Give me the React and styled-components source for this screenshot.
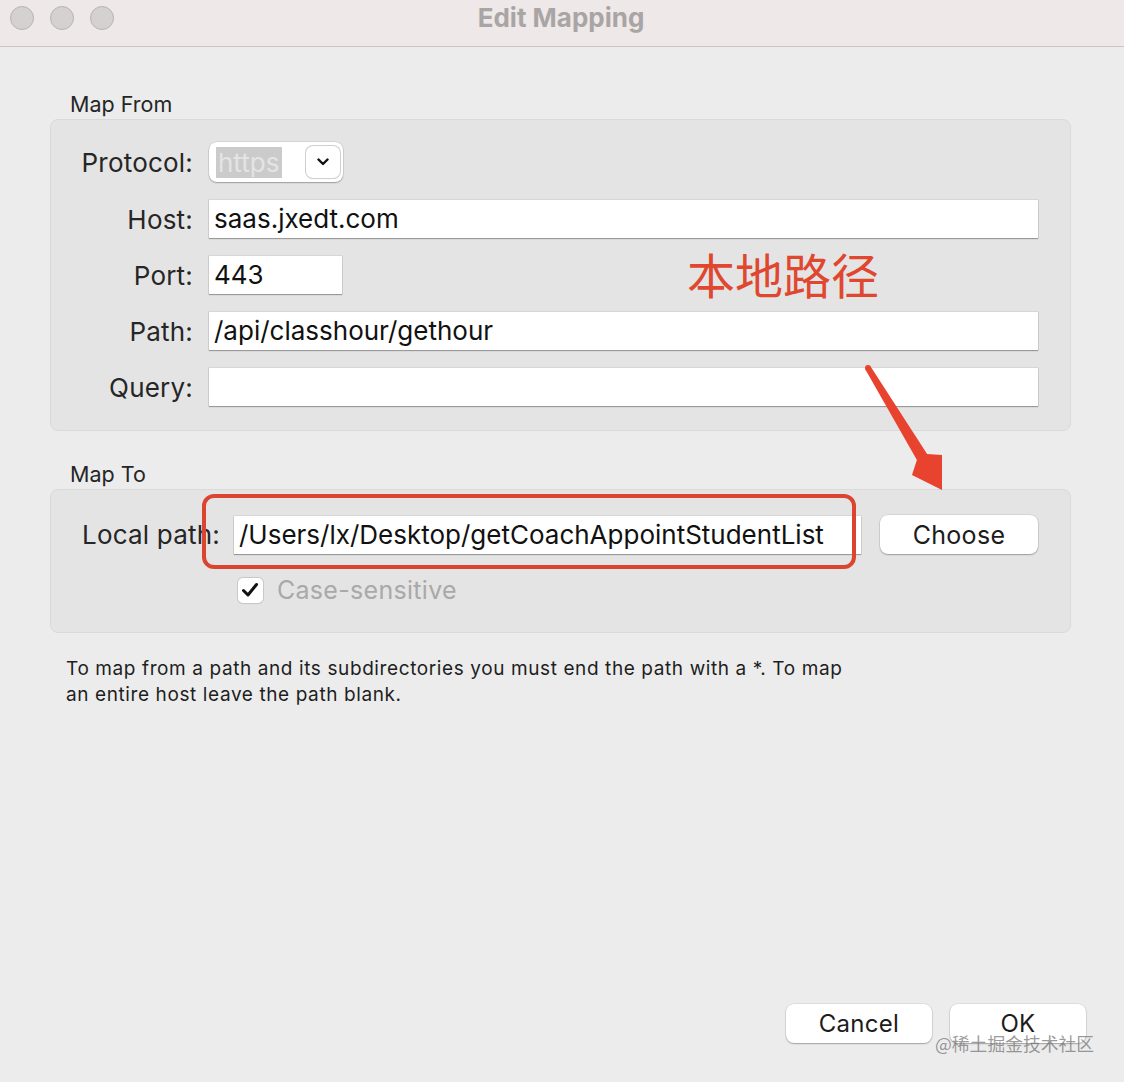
import React from "react";
import styled, { createGlobalStyle } from "styled-components";

const Global = createGlobalStyle`
  html, body { margin: 0; padding: 0; }
  body {
    background: #ececec;
    font-family: Inter, "Noto Sans", "Liberation Sans", sans-serif;
    color: #222;
  }
`;

const ui = `Inter, "Noto Sans", "Liberation Sans", sans-serif`;
const cjk = `"Noto Sans CJK SC", "Noto Sans", sans-serif`;

export default function App() {
  return (
    <>
      <Global />
      <Window>
        <TitleBar>
          <Lights>
            <Light />
            <Light />
            <Light />
          </Lights>
          <Title>Edit Mapping</Title>
          <span />
        </TitleBar>

        <Body>
          <SectionLabel>Map From</SectionLabel>
          <Group $pad="22px 32px 24px 0">
            <FormGrid>
              <Label>Protocol:</Label>
              <Popup>
                <Selected>https</Selected>
                <PopupArrow>
                  <svg width="12" height="8" viewBox="0 0 12 8">
                    <path d="M1.5 1.5 L6 6 L10.5 1.5" fill="none" stroke="#111" strokeWidth="2.4" strokeLinecap="round" strokeLinejoin="round" />
                  </svg>
                </PopupArrow>
              </Popup>
              <Label>Host:</Label>
              <Field>saas.jxedt.com</Field>
              <Label>Port:</Label>
              <Field $w="133px">443</Field>
              <Label>Path:</Label>
              <Field>/api/classhour/gethour</Field>
              <Label>Query:</Label>
              <Field />
            </FormGrid>
          </Group>

          <SectionLabel $gap="31px">Map To</SectionLabel>
          <Group $pad="25px 32px 27px 31px">
            <LocalGrid>
              <Label>Local path:</Label>
              <Field>/Users/lx/Desktop/getCoachAppointStudentList</Field>
              <Button $w="158px" $size="25px" $ml="5px">Choose</Button>
              <CheckRow>
                <Check>
                  <svg width="18" height="16" viewBox="0 0 18 16">
                    <path d="M2.5 8.5 L7 13 L15.5 2.5" fill="none" stroke="#111" strokeWidth="3" strokeLinecap="round" strokeLinejoin="round" />
                  </svg>
                </Check>
                <CheckText>Case-sensitive</CheckText>
              </CheckRow>
            </LocalGrid>
          </Group>

          <Help>
            To map from a path and its subdirectories you must end the path with a *. To map
            <br />
            an entire host leave the path blank.
          </Help>
        </Body>

        <Footer>
          <Button $w="146px">Cancel</Button>
          <Button $w="136px">OK</Button>
        </Footer>

        <Note>本地路径</Note>
        <Arrow width="90" height="135" viewBox="0 0 90 135">
          <circle cx="8" cy="8" r="3" fill="#e8432e" />
          <polygon
            points="10.6,6.4 67.1,93.9 82,95 82,130 52,115 56.9,100.1 5.4,9.6"
            fill="#e8432e"
          />
        </Arrow>
        <Highlight />
        <Watermark>@稀土掘金技术社区</Watermark>
      </Window>
    </>
  );
}

const Window = styled.div`
  position: relative;
  width: 1124px;
  height: 1082px;
  display: flex;
  flex-direction: column;
  background: #ececec;
  overflow: hidden;
`;

const TitleBar = styled.div`
  height: 46px;
  flex: none;
  display: grid;
  grid-template-columns: 1fr auto 1fr;
  align-items: center;
  background: #eee8e8;
  border-bottom: 1px solid #c9c5c5;
  padding: 0 10px;
`;

const Lights = styled.div`
  display: flex;
  gap: 16px;
  margin-top: -10px;
`;

const Light = styled.div`
  width: 22px;
  height: 22px;
  border-radius: 50%;
  background: #d6d1d1;
  border: 1px solid #b9b4b4;
`;

const Title = styled.div`
  font-family: ${ui};
  font-weight: 700;
  font-size: 26px;
  color: #a9a5a5;
  margin-top: -12px;
  margin-left: -2px;
`;

const Body = styled.div`
  display: flex;
  flex-direction: column;
  padding: 0 53px 0 50px;
`;

const SectionLabel = styled.div`
  font-family: ${ui};
  font-size: 21.5px;
  line-height: 24px;
  color: #262626;
  padding-left: 20px;
  margin-top: ${p => p.$gap || "45px"};
  margin-bottom: 3px;
`;

const Group = styled.div`
  background: #e4e4e4;
  border: 1px solid #dadada;
  border-radius: 8px;
  padding: ${p => p.$pad};
`;

const FormGrid = styled.div`
  display: grid;
  grid-template-columns: 142px 1fr;
  column-gap: 16px;
  row-gap: 18px;
  align-items: center;
`;

const Label = styled.div`
  font-family: ${ui};
  font-size: 26px;
  color: #262626;
  text-align: right;
  letter-spacing: 0.2px;
`;

const Field = styled.div`
  height: 38px;
  box-sizing: border-box;
  width: ${p => p.$w || "auto"};
  background: #fff;
  box-shadow: 0 1px 1px rgba(0, 0, 0, 0.28), 0 0 0 0.5px rgba(0, 0, 0, 0.12);
  font-family: ${ui};
  font-size: 26px;
  line-height: 38px;
  color: #111;
  padding: 0 5px;
  white-space: nowrap;
  overflow: hidden;
`;

const Popup = styled.div`
  width: 134px;
  height: 40px;
  box-sizing: border-box;
  background: #fff;
  border-radius: 8px;
  box-shadow: 0 1px 1.5px rgba(0, 0, 0, 0.28), 0 0 0 0.5px rgba(0, 0, 0, 0.12);
  display: flex;
  align-items: center;
  justify-content: space-between;
  padding: 0 3px 0 7px;
`;

const Selected = styled.span`
  font-family: ${ui};
  font-size: 26px;
  line-height: 31px;
  padding: 0 3px 0 2px;
  background: #cbcbcb;
  color: #e4e4e4;
`;

const PopupArrow = styled.span`
  width: 34px;
  height: 32px;
  box-sizing: border-box;
  border-radius: 7px;
  background: #fff;
  box-shadow: 0 0 0 1px #cfcfcf, 0 1px 1px rgba(0, 0, 0, 0.15);
  display: flex;
  align-items: center;
  justify-content: center;
`;

const LocalGrid = styled.div`
  display: grid;
  grid-template-columns: auto 1fr auto;
  column-gap: 14px;
  row-gap: 21px;
  align-items: center;
`;

const Button = styled.div`
  width: ${p => p.$w};
  height: 39px;
  box-sizing: border-box;
  margin-left: ${p => p.$ml || "2px"};
  background: #fff;
  border-radius: 8px;
  box-shadow: 0 1px 1.5px rgba(0, 0, 0, 0.28), 0 0 0 0.5px rgba(0, 0, 0, 0.12);
  display: flex;
  align-items: center;
  justify-content: center;
  font-family: ${ui};
  font-size: ${p => p.$size || "24px"};
  color: #1c1c1c;
  letter-spacing: 0.3px;
`;

const CheckRow = styled.div`
  grid-column: 2 / 4;
  display: flex;
  align-items: center;
  gap: 14px;
  padding-left: 4px;
`;

const Check = styled.span`
  width: 25px;
  height: 25px;
  box-sizing: border-box;
  border-radius: 5px;
  background: #fff;
  box-shadow: 0 0 0 1px #c9c9c9, 0 1px 1px rgba(0, 0, 0, 0.12);
  display: flex;
  align-items: center;
  justify-content: center;
`;

const CheckText = styled.span`
  font-family: ${ui};
  font-size: 25px;
  color: #a9a9a9;
  letter-spacing: 0.3px;
`;

const Help = styled.div`
  font-family: ${ui};
  font-size: 19px;
  line-height: 26px;
  letter-spacing: 0.6px;
  color: #1e1e1e;
  padding-left: 16px;
  margin-top: 23px;
  white-space: nowrap;
`;

const Footer = styled.div`
  margin-top: auto;
  display: flex;
  justify-content: flex-end;
  gap: 16px;
  padding: 0 38px 39px 0;
`;

const Note = styled.div`
  position: absolute;
  left: 687px;
  top: 249px;
  font-family: ${cjk};
  font-size: 48px;
  line-height: 48px;
  color: #e0472f;
`;

const Arrow = styled.svg`
  position: absolute;
  left: 860px;
  top: 360px;
`;

const Highlight = styled.div`
  position: absolute;
  left: 202px;
  top: 494px;
  width: 654px;
  height: 75px;
  box-sizing: border-box;
  border: 4px solid #db452f;
  border-radius: 12px;
`;

const Watermark = styled.div`
  position: absolute;
  left: 935px;
  top: 1032px;
  font-family: ${cjk};
  font-size: 17.8px;
  line-height: 22px;
  color: rgba(110, 110, 110, 0.7);
`;
